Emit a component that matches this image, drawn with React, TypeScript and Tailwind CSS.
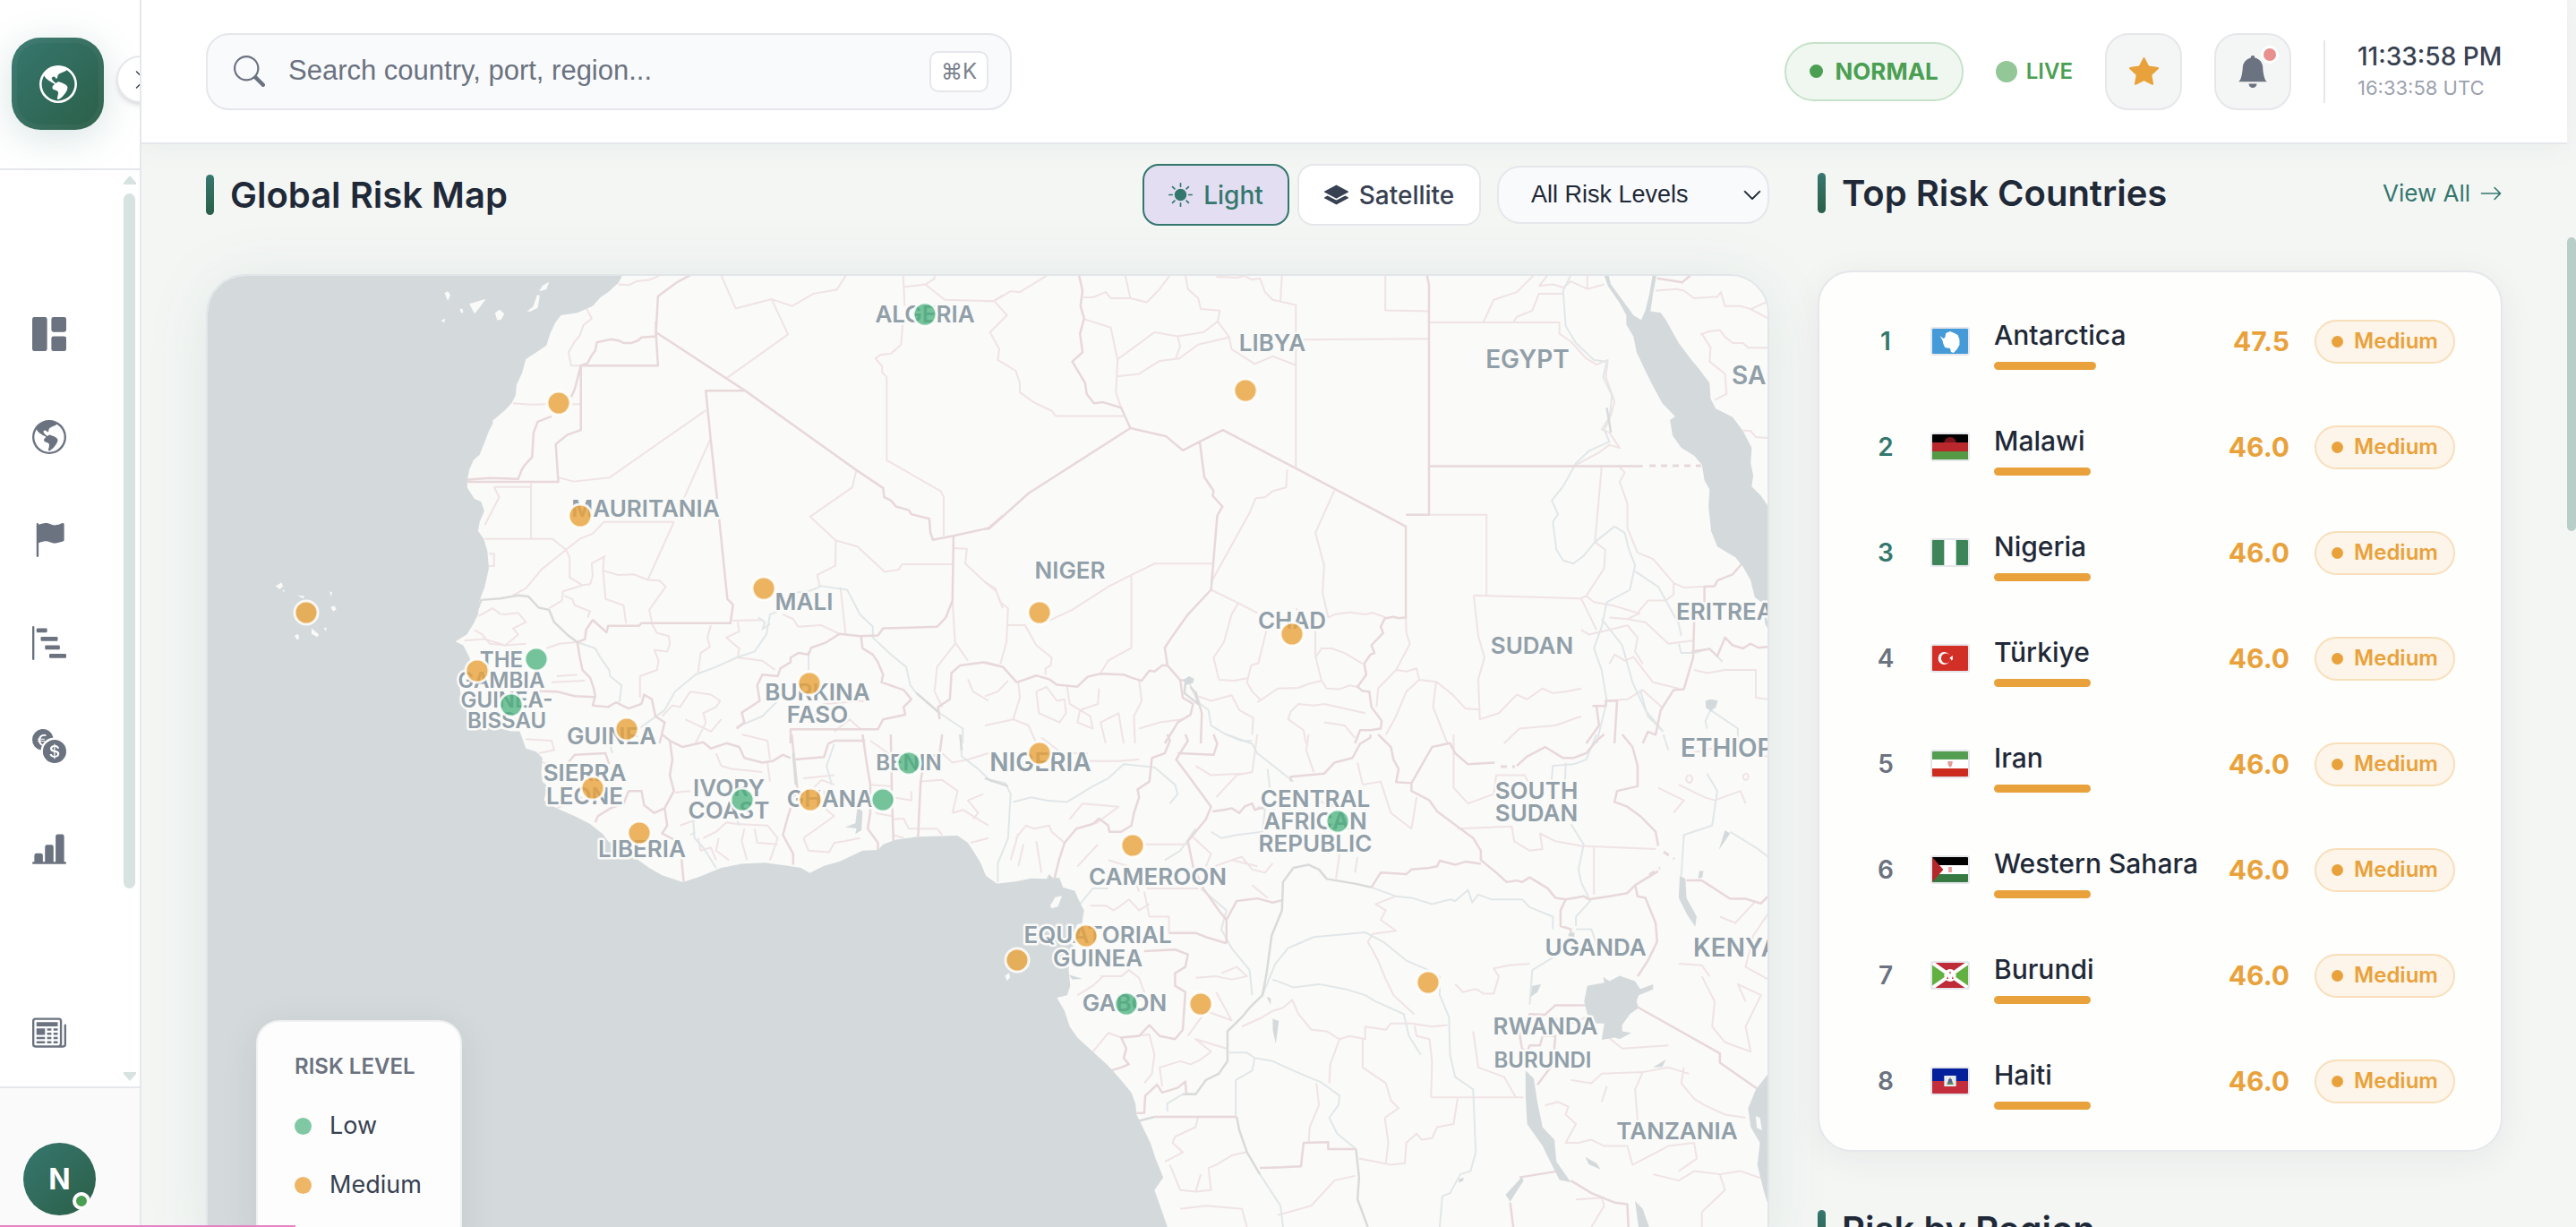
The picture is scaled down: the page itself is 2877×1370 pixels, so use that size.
import React from 'react';
import {
  BsArrowRight,
  BsBarChartLineFill,
  BsBarChartSteps,
  BsBellFill,
  BsChevronDown,
  BsChevronRight,
  BsCurrencyExchange,
  BsFlagFill,
  BsGlobeAmericas,
  BsGrid1X2Fill,
  BsLayersFill,
  BsNewspaper,
  BsSearch,
  BsStarFill,
  BsSunFill,
} from 'react-icons/bs';

const navItems = [
  { label: 'Dashboard', icon: BsGrid1X2Fill },
  { label: 'World', icon: BsGlobeAmericas },
  { label: 'Countries', icon: BsFlagFill },
  { label: 'Timeline', icon: BsBarChartSteps },
  { label: 'Currencies', icon: BsCurrencyExchange },
  { label: 'Analytics', icon: BsBarChartLineFill },
];

const countries = [
  { name: 'Antarctica', code: 'aq', score: 47.5 },
  { name: 'Malawi', code: 'mw', score: 46 },
  { name: 'Nigeria', code: 'ng', score: 46 },
  { name: 'Türkiye', code: 'tr', score: 46 },
  { name: 'Iran', code: 'ir', score: 46 },
  { name: 'Western Sahara', code: 'eh', score: 46 },
  { name: 'Burundi', code: 'bi', score: 46 },
  { name: 'Haiti', code: 'ht', score: 46 },
];

const flags: Record<string, React.ReactNode> = {
  aq: (
    <>
      <rect width="42" height="28" fill="#459bd8" />
      <path d="M9 8l4 3 2-1 1-5 5-2 5 2 4 2 2 5v6l-3 5-4 4-3-1-1-4-6-1-2-4-1-4z" fill="#fff" />
    </>
  ),
  mw: (
    <>
      <rect width="42" height="28" fill="#000" />
      <rect y="9" width="42" height="10" fill="#b9282c" />
      <rect y="19" width="42" height="9" fill="#549a45" />
      <path d="M14 9a7 6 0 0 1 14 0z" fill="#7a1519" />
    </>
  ),
  ng: (
    <>
      <rect width="42" height="28" fill="#3d8558" />
      <rect x="14" width="14" height="28" fill="#fff" />
    </>
  ),
  tr: (
    <>
      <rect width="42" height="28" fill="#d22f27" />
      <circle cx="14" cy="14" r="7" fill="#fff" />
      <circle cx="16" cy="14" r="5.6" fill="#d22f27" />
      <path d="M20 14l4-2v4zM24 11l-1 6-2-4z" fill="#fff" />
    </>
  ),
  ir: (
    <>
      <rect width="42" height="28" fill="#fff" />
      <rect width="42" height="9" fill="#549e52" />
      <rect y="19" width="42" height="9" fill="#cc2b20" />
      <path d="M18 11h6l-1 5-2 2-2-2z" fill="#e79a98" />
    </>
  ),
  eh: (
    <>
      <rect width="42" height="28" fill="#fff" />
      <rect width="42" height="9" fill="#000" />
      <rect y="19" width="42" height="9" fill="#367a42" />
      <path d="M0 0l13 14L0 28z" fill="#b5282a" />
      <rect x="19" y="11" width="4" height="6" fill="#e79a98" />
    </>
  ),
  bi: (
    <>
      <rect width="42" height="28" fill="#bd2c37" />
      <path d="M0 0l21 14L0 28zM42 0L21 14l21 14z" fill="#62b03f" />
      <path d="M0 0l42 28M42 0L0 28" stroke="#fff" strokeWidth="4" />
      <circle cx="21" cy="14" r="7" fill="#fff" />
      <path d="M21 9l1 3h-2zM18 15l1 3h-2zM24 15l1 3h-2z" fill="#bd2c37" />
    </>
  ),
  ht: (
    <>
      <rect width="42" height="14" fill="#04209a" />
      <rect y="14" width="42" height="14" fill="#c42d3c" />
      <rect x="14" y="8" width="14" height="12" fill="#e8ecee" />
      <path d="M17 18h8l-2-5-2-3-2 3z" fill="#5f8e58" />
      <rect x="19" y="12" width="4" height="4" fill="#5b5f9a" />
    </>
  ),
};

// Each tile carries its own grid; sx/sy turn tile units into map units.
const tiles = [
  {
    x: 220,
    y: 290,
    sx: 0.574,
    sy: 0.3444,
    water:
      'M831 40L820 75L800 105L785 122L770 150L740 172L708 180L697 205L687 240L680 278L662 298L640 322L633 365L622 405L620 440L612 465L598 490L575 522L576 530L568 555L560 590L550 632L538 650L530 680L526 715L526 740L540 775L553 785L559 815L550 850L547 880L558 905L565 945L568 1000L560 1060L550 1105L547 1150L538 1180L525 1215L503 1238L518 1250L528 1282L535 1310L520 1340L510 1375L515 1430L530 1480L560 1510L605 1525L625 1545L632 1600L-10 1600L-10 40Z',
    islands:
      'M482 108l6-6 5 12-5 20zM530 143l32-16-13 30-9 18zM580 172l9-10 9 14-6 18-8 2zM511 160l6-1 1 12-4 2zM475 196l8-5-2 14zM642 168l12-16 8-38 5 2-4 40-14 12zM666 102l6-18 13-12-5 24zM153 1058l12-12 2 14-6 8zM166 1070l5 2-2 6zM195 1088l14 2-2 8zM258 1075l5 4-2 14zM260 1126l8-4 3 12-6 6zM247 1194l5-2-1 14zM223 1195l14 20-3 8-11-10zM190 1218l7-4 2 14-5 4z',
    lakes: '',
    nation:
      'M960 50L935 72L897 118L893 240L897 343L747 343L747 552L720 568L698 598L703 720L526 720M893 200V248L865 252L858 262L845 270L830 270L820 262L805 258L778 268L775 295L768 310L760 335L747 343L735 420L728 445M690 508L663 525L655 560L652 640L638 665L632 680L625 711L570 708L526 713M893 235L1067 425L1283 682L1335 740L1337 770L1350 780L1360 800L1385 812L1390 825L1425 840L1427 885L1432 908L1472 895L1540 870L1568 830M1067 425L990 425L1000 590L1012 775M1016 840L1032 1100L1043 1118L1038 1178H865L860 1187L800 1187L797 1208L770 1168L757 1200L755 1230L740 1240M1472 895L1470 1105L1457 1160L1440 1190L1335 1195L1325 1218L1290 1220L1250 1213L1225 1240L1195 1258L1190 1280L1170 1275L1155 1290L1155 1305L1135 1325L1130 1350L1100 1345L1090 1380L1095 1430L1060 1468L1065 1500L1050 1520M1292 1220L1295 1260L1315 1280L1325 1305L1335 1345L1332 1370L1375 1395L1390 1425L1375 1450L1378 1475L1335 1490L1325 1522H1155V1568M740 1240L745 1290L750 1330L765 1355L772 1390L775 1415L770 1445L800 1450L815 1435L840 1455L865 1440L870 1410L885 1425L892 1480L910 1500L900 1568M660 1398L700 1400L735 1415L773 1418M1445 1490L1442 1450L1465 1425L1468 1340L1485 1315L1530 1305L1568 1320',
    region:
      'M820 80L840 82L855 70L880 65L900 52M758 158L768 190L752 212L745 245L735 265L723 300L728 343H747M1020 50L1048 158L1118 128L1158 150L1200 110L1245 97L1263 50M1118 128L1150 242L1032 382M1374 50L1377 150M1373 210L1370 275L1350 305L1330 308L1320 320L1333 345L1333 365L1342 380V650L1447 750L1453 770V895M1377 88L1417 80L1455 130L1550 134L1568 115M1435 50V62L1417 80M990 488L803 706L733 719L703 706M998 585L947 775M928 850L877 1038L850 1020L820 1022L790 1008M578 737H650V905M578 737L588 770L560 860M650 725V737M560 905H692L718 940L670 1005L640 1065L615 1088M928 850H792L770 888L745 905L718 940L725 965V1030L750 1055L732 1065L712 1075L710 1105L685 1130M795 960L768 985L770 1025L765 1052L750 1055M792 960L790 1008L795 1100L830 1120L835 1180M877 1038L900 1040L912 1060L880 1135L885 1175M615 465L650 470L680 468M730 468H747M1283 682L1275 738L1193 833L1243 910L1285 930L1338 1012L1365 1005L1372 987H1470M1243 910L1242 992L1207 1022L1212 1062M1252 1062L1262 1213M1472 935L1498 937L1495 985L1530 1040L1555 1075L1568 1130M568 953H578V993H568M548 1155L575 1130L590 1148L600 1150L625 1145L640 1175L615 1195L625 1215L600 1250L570 1245L555 1215L540 1200M885 1180L895 1210L918 1220L920 1245L915 1270L890 1265L898 1300L895 1330L862 1350V1420M1000 1185L993 1225L998 1255L980 1275L975 1340M1052 1175L1055 1205L1030 1225L1055 1260L1052 1290L1100 1300L1125 1330M760 1160L765 1140L735 1120L730 1100L715 1090M905 1480L925 1445L940 1450L960 1400L1000 1410L1018 1430L1010 1450L985 1470L990 1500L970 1568M1470 1105L1475 1240L1500 1300M1475 1245L1440 1320L1435 1400L1450 1450M1140 1150L1160 1165L1170 1190L1215 1185L1250 1213M1042 1170L1100 1168M680 1260L705 1245L740 1240M520 1235L560 1230L600 1250L640 1245M1240 1530L1270 1490L1290 1520M700 1350L740 1345M690 1370L755 1365M950 1490L1000 1530L1020 1490M1500 1360L1510 1400L1540 1430M1190 1500L1220 1440L1300 1430',
    river:
      'M740 1240L775 1260L785 1290L802 1330L804 1350L826 1380L822 1435M1160 1080L1190 1075L1215 1058L1265 1070L1290 1150L1315 1190V1225L1350 1280L1380 1320L1388 1380L1400 1405L1445 1470L1490 1520V1568M1130 1140L1115 1150L1108 1215L1085 1270L1050 1290L1010 1320L970 1345L930 1400L910 1460L860 1520M1190 1270V1330M1130 1430L1100 1480L1050 1515M1092 1160L1105 1175L1100 1198L1115 1180',
    trunk: 'M547 1130L553 1103L590 1098L625 1088L645 1092L665 1128L685 1135L695 1175L720 1215L740 1240M1400 1405L1445 1470',
  },
  {
    x: 1100,
    y: 290,
    sx: 0.574,
    sy: 0.3444,
    water:
      'M1203 40L1212 85L1235 140L1248 180L1248 210L1262 250L1268 300L1285 360L1300 410L1318 465L1343 508L1333 520L1338 570L1355 610L1380 635L1395 665L1400 715L1410 745L1408 800L1413 880L1425 930L1460 965L1475 995L1490 1040L1498 1095L1515 1115L1518 1180L1540 1250L1540 820L1524 800L1510 765L1492 735L1495 700L1490 660L1492 610L1475 555L1455 510L1422 483L1412 450L1410 400L1390 355L1375 325L1350 270L1325 195L1315 172L1295 167L1300 110L1308 40L1300 40L1293 110L1285 165L1277 195L1262 180L1240 130L1218 80L1212 40Z',
    islands: '',
    lakes:
      'M387 1362l10-12 10 8-2 14-16 8zM1402 1430l10-5 14 4-4 22-10 12-9-10z',
    nation:
      'M183 50L190 100L186 150L193 190L185 240L190 300L170 330L195 400L198 435L212 465L230 462L265 480L283 546L353 573L385 618L418 590L463 552L600 672L819 865V1160L805 1162L795 1158L778 1163L770 1190L775 1210L752 1250L758 1275L750 1280L738 1310L742 1345L725 1385L735 1398L748 1400L752 1450L772 1495L770 1520L750 1525L730 1525L720 1568M283 546L85 757L8 872L0 873M418 590L427 705L445 750L443 765L462 800L452 830L440 1070L395 1150L365 1220L350 1258L355 1315L380 1363H400M860 50L864 80V827H819M864 669H1280M355 1315L345 1315L330 1335L320 1332L305 1365L285 1355L270 1345L225 1342L200 1352L180 1384L140 1378L125 1360L100 1348L62 1370L35 1320L0 1305M380 1363L385 1420L405 1440L400 1475L375 1500L370 1515L350 1568M410 1400L422 1470L420 1568M1473 985L1455 1020L1425 1040L1420 1058L1400 1060V1130L1380 1170L1378 1290L1360 1392L1340 1395L1315 1460L1305 1540L1290 1530L1280 1568M1375 1270L1410 1262L1425 1285L1440 1225L1455 1250L1475 1260L1490 1245L1505 1258L1524 1255M1308 60L1357 73L1373 50M1182 1447H1208V1430H1230L1225 1568M1190 1447L1195 1510L1170 1568',
    region:
      'M0 134H18L50 102L68 105L120 52M18 134L43 180L10 235L28 290L25 325L60 360L68 400L68 430L95 462L130 490L138 507H270M273 50L283 125M192 122L210 122L235 105L245 125L283 125L315 138L340 95L360 50M192 192L245 220L258 325L255 430L265 480M258 323L330 235L375 248L425 235L453 200L457 165L420 160L415 125L395 95L390 50M453 200L475 250L480 290L525 338L560 313L605 342M475 252L415 275L378 320L340 328L300 370L258 378M375 248L380 280L372 318M450 55L490 58L505 52L520 65L535 60L545 105L560 130L605 147V675M578 50L575 135M605 259L864 256M779 50V164L864 167M864 203H1118V240L1140 265L1170 320L1190 340L1212 325L1208 380L1225 460L1218 505L1200 550L1215 560L1235 610L1215 600L1195 625L1150 665M970 203L990 130L1035 105L1068 50M1028 203L1035 185L1065 165L1078 110H1125M1078 85L1095 50M1078 85L1105 80L1125 90L1140 70L1172 95L1205 80M1172 50V95M588 680L586 738L560 750L545 770L527 773L515 820L442 1040M680 748L643 885L660 990L657 1080L668 1160M864 827H976V1088M951 1088L1160 1098L1190 1200M951 1088L960 1220L972 1290L960 1360L963 1490L1000 1470L1020 1435L1035 1410L1055 1425L1085 1390L1105 1405L1130 1400L1160 1390M1200 672L1187 915L1207 940L1205 1000L1170 1090L1160 1098M1235 672L1245 690L1235 720L1250 790V870L1270 950L1300 970L1340 1048L1360 1063L1420 1058M1170 1090L1185 1110L1220 1120L1270 1145L1290 1105H1325L1340 1085V1050M440 1070L493 1113L530 1145M493 1113L480 1150L465 1240L445 1290L455 1360M548 1200L532 1308L518 1315L510 1370L520 1400L535 1425M643 1200V1285L655 1365M643 1290L655 1260L675 1260L700 1275L735 1310M605 1130L615 1150L640 1190M668 1160L680 1150L710 1143L740 1150L755 1145L780 1160M442 985H330L285 1022L240 1060L170 1135L125 1170M285 1022V1258L250 1290L240 1300L225 1340M0 1045L20 1065L30 1110L45 1130L42 1240L30 1310M45 1185H78L100 1250L130 1290L128 1315L118 1325V1345M819 1160L820 1210L827 1245L800 1330L765 1390L762 1450M800 1330L820 1335L840 1325L845 1362L878 1368L895 1390L910 1410L935 1455L963 1458M845 1362L820 1400L800 1480L780 1540M878 1368L872 1450L900 1568M455 1362L485 1365L510 1357M655 1365L630 1375L610 1388L570 1390L530 1435M655 1365L665 1390L690 1392L710 1380L725 1385M625 1568L620 1525L590 1490L595 1465L610 1440L640 1445L660 1440L740 1470M1305 100L1345 95L1360 100L1380 125L1425 120L1432 105L1440 150L1470 150L1490 160L1524 190M1490 160L1524 135M1392 242L1410 232L1430 228L1440 250L1455 270L1475 270L1485 285L1524 285M1395 240L1412 285L1410 330L1440 370L1443 435L1420 455M1475 553L1490 555L1500 575L1524 578M1160 1200L1175 1215L1215 1200L1250 1185L1270 1225L1265 1270L1280 1310M1250 1165L1285 1175L1330 1245L1378 1235M1275 1145L1250 1165L1215 1160M1215 1310L1225 1280L1245 1300L1262 1288L1300 1370L1350 1390M1210 1430L1250 1425L1280 1395L1320 1455M1380 1330L1405 1340L1440 1330L1500 1330V1420L1524 1425M65 1370L68 1420L55 1490M0 1415L25 1400L45 1365M160 1384L165 1440L205 1480L210 1520L180 1500L185 1460L220 1440L222 1390M300 1365L305 1430L290 1480L292 1568M235 1568L225 1500L260 1470L270 1568M100 1400L120 1385L140 1430L155 1425L158 1470L145 1500L105 1470L100 1400M0 1510L55 1490L85 1510L100 1568M415 1415L440 1430L480 1412L495 1460L522 1485L520 1540M300 1520L340 1500L385 1490M660 1500L700 1510L720 1550M1010 1568L1040 1520L1110 1510L1160 1480',
    river:
      'M1140 50L1125 100L1130 215L1150 270L1185 325L1210 330L1203 380L1220 440L1215 520L1205 550L1215 590L1175 620L1150 660L1125 735L1103 780L1115 825L1105 850L1112 940L1125 975L1145 985L1165 960L1187 915L1225 865L1245 885L1253 940L1265 990L1255 1070L1210 1110L1200 1190L1185 1260L1200 1330L1210 1430L1190 1568M1265 1010L1310 1060L1350 1180L1355 1220M1200 1165L1240 1250L1260 1370L1285 1460L1320 1530M1350 1245L1355 1275L1380 1275L1410 1260L1435 1303M397 1370L415 1435L435 1460L440 1510L470 1540L500 1560L520 1560M1412 1460L1402 1495L1405 1520M1412 1460L1465 1520V1568M1275 1395L1290 1480L1320 1530',
    trunk: 'M390 1375L388 1405L415 1440L410 1405L400 1385M1210 480L1218 560',
  },
  {
    x: 220,
    y: 820,
    sx: 0.574,
    sy: 0.3508,
    water:
      'M628 -10L640 45L660 55L672 75L670 120L672 150L682 165L675 210L700 235L735 260L765 285L790 318L800 340L850 390L880 425L905 448L945 470L975 455L1020 425L1060 412L1105 408L1150 418L1175 425L1192 441L1220 418L1250 405L1295 370L1325 368L1335 350L1360 335L1400 326L1480 322L1500 345L1512 375L1525 410L1535 450L1558 477L1558 1700L-10 1700L-10 -10Z',
    islands: '',
    lakes: 'M1285 230l10 15-2 60-12 12 2-18-22-4 20-12z',
    nation:
      'M722 90L735 65L795 60L802 95M775 280L780 260L805 235L830 220L840 180L865 180L870 225L890 250L910 235L915 290L905 315L940 345L947 470M905 0L920 20L945 40L985 25L1000 45L1030 28L1055 40L1065 75L1100 90L1120 85L1140 65L1155 75M920 20L925 80L920 130L928 180L910 235M1157 0L1163 90L1168 170L1150 260L1140 320L1160 380V415M1163 80L1220 72L1228 30L1240 20L1300 20M1295 0L1302 80L1310 160V250L1305 300L1325 345V368M1350 0L1352 180L1355 340M1450 0L1445 60L1415 80L1408 150L1403 325',
    region:
      'M640 15L690 20L695 50L665 60M645 70L690 100M700 235L750 200M985 330L1010 310L1030 280L1050 285L1110 290L1130 330L1115 400M1015 330L1010 370L1035 400M1065 300L1060 340L1070 400M1085 300L1090 345L1130 350M975 330L980 370L1000 360L1010 400M1180 330L1190 370L1230 375L1240 345L1260 340L1290 330M1220 180L1225 240L1240 260L1180 330M1355 200L1390 210V180M1355 270L1375 268L1385 300L1440 300L1450 320M1450 60L1470 90L1500 80L1540 60M1470 250L1490 240L1510 260L1540 290M1010 60L1020 100L1040 110L1100 120M990 260L940 290M1110 90L1115 150M1505 345L1540 330M1408 150L1450 145L1480 180L1470 250M1355 320L1375 330M1310 160L1352 165M1320 250L1352 260M1060 0L1110 20L1115 80M1180 140L1240 130M960 180L930 185M1200 170L1215 145L1240 160M1310 20L1345 60L1352 120M1530 190L1500 210L1520 250L1510 270',
    river:
      'M800 0L808 60M1240 30L1225 100L1235 160M1485 0L1488 70L1520 110L1545 150L1568 155M965 260L968 330L985 360L1010 425M868 0L885 -20M1050 270L1055 290M960 320L970 310',
    trunk: 'M1160 60L1165 160M1485 0L1488 50',
  },
  {
    x: 1100,
    y: 820,
    sx: 0.574,
    sy: 0.3508,
    water:
      'M-10 450L22 475L60 468L90 458L120 460L125 445L132 457L145 457L152 487L175 498L182 525L193 560L190 590L186 640L165 690L163 750L166 800L160 830L140 838L155 880L165 930L180 965L210 1010L240 1055L265 1100L285 1140L293 1175L295 1210L310 1260L322 1300L332 1350L347 1410L330 1450L345 1520L362 1600L-10 1700ZM1540 1050L1524 1080L1500 1130L1485 1190L1490 1250L1508 1300L1503 1370L1515 1450L1530 1530L1550 1530V1050Z',
    islands: 'M127 545l10-27 13-4-8 34-12 6zM39 768l8-8 2 14-6 10zM1500 1215l8 5 4 40-10-8z',
    lakes:
      'M1172 800L1205 790L1203 772L1215 785L1235 768L1265 785L1275 810L1300 795L1300 812L1272 830L1268 850L1272 870L1255 890L1240 925L1240 945L1258 950L1235 970L1225 965L1200 972L1205 920L1190 920L1172 890L1166 850ZM1052 1070L1068 1095L1075 1170L1085 1250L1108 1290L1112 1360L1140 1425L1118 1418L1100 1360L1085 1310L1055 1240L1052 1150ZM1265 1485L1280 1510L1293 1570L1272 1570ZM1352 450L1363 460L1365 520L1385 580L1382 612L1365 570L1350 520ZM1065 800L1082 795L1075 820L1062 835ZM1168 1345L1190 1365L1198 1385L1175 1368ZM1045 1408L1048 1420L1022 1487L1013 1465ZM163 765L190 778L170 780ZM1440 305L1450 315L1428 368ZM560 905L572 912L566 985L560 940ZM1300 1060L1325 1035L1318 1058ZM922 1415l10-5-2 12-8 5zM548 835l8 5 0 20zM1390 435l8 0-2 20-8 5zM1135 635l12-5 0 15-10 5z',
    nation:
      'M355 0L360 20L350 60L325 75L320 150L297 175L300 200L290 250L285 290L265 310L242 310L240 290L222 268L210 285L178 300L155 345L145 395L135 460M390 0L395 20L372 80L395 130L440 230L430 270L395 340L405 420L425 490L455 560L470 590V665M375 60L445 65L452 30L445 0M443 245L465 240L480 235L495 250L505 230L520 220L525 240L550 228M595 150L595 135L660 125L680 90L715 75L730 30L750 10V0M765 0L790 40L795 80L805 110L800 152L830 155L870 40L905 28L915 60L940 95L992 90M830 155V180L865 210L880 245L925 300L950 330L965 370V400L995 440L1015 470L1035 465L1045 470L1060 455L1095 490L1110 520L1130 525L1120 560V610L1140 620V640M965 412L935 405L915 415L885 402L880 420L865 425L830 430L820 445L770 440L752 487M1035 100L1055 70L1090 40L1125 75L1145 75L1170 60L1190 20L1205 0M1240 0L1260 40L1270 100V165L1230 180L1225 215L1250 230L1275 260L1305 310L1310 355M1130 525L1165 515L1175 525L1215 515L1250 505L1265 480L1310 435M1265 480L1270 515L1285 520L1305 600L1308 660L1290 720L1270 770M1365 465H1395L1450 523L1480 523L1510 538L1524 515M1270 868L1430 1015V1045L1505 1130M1168 862H1110L1090 892L1060 890L1040 950L1045 1000L1055 1010L1060 990L1080 990L1085 960L1110 960L1105 1050L1075 1115M1115 1390L1040 1410M1140 1420L1180 1460L1225 1490L1250 1495L1252 1568M1022 1490L1028 1568M358 632L410 632L430 645L470 665M470 590L490 530L530 522L560 535L578 528M310 690L370 685L395 700L390 740L370 760V800L390 820L385 940L370 970L340 960L320 925L300 960L265 965L275 1000L270 1030L280 1050L265 1060L245 1070M295 1205L310 1205L312 1150L335 1115L345 1140L375 1125L390 1105L392 1145L405 1145M330 1217H490M535 1380L570 1378L615 1375L620 1300L668 1298V1320H722',
    region:
      'M300 350H395M920 300L1025 293L1030 340L1060 370L1085 365L1080 315L1110 340L1160 355L1305 365M1185 360V510M912 0V170L940 220L990 190M868 1155H1048M868 1155L870 1040L865 970L840 960L835 920M920 1155L912 1240L880 1250L870 1285L850 1290L840 1270L820 1300L817 1365L790 1370L760 1360L728 1350M780 1365L785 1300L778 1220M500 930L540 900L560 880L580 870L598 845L610 890L635 940L665 945L690 970L710 960L740 970V930L780 940L790 920L830 920L870 930L900 925M690 970L672 1050L670 1110M735 970L735 1060L780 1110L790 1165L805 1190L778 1220M800 515L760 540L780 560L770 590L800 625L755 635L745 660L765 720L780 780L795 830L835 890M915 795L930 820L955 810L970 825L990 825L1000 770L990 745L1020 735L1060 730M950 945L960 1060L1010 1090L1033 1155M645 1110L650 1180L632 1250L630 1300M310 500L320 580L358 580V632M205 545L235 545L250 560L260 550L280 525L300 560L320 540M415 490H315M225 770H265L280 750L300 775L310 820L280 890M180 830L210 800L230 770M265 965L320 955L330 1020L325 1080L310 1110M345 1120L340 1060L380 1040L400 1050L420 1035L440 1010L410 970L440 985L470 1000M415 1217L410 1250L370 1280L365 1300L385 1330L350 1360M508 1330L480 1340L450 1370L435 1380L440 1450L410 1455L380 1450L360 1370M380 1510L430 1500L500 1510L510 1568M720 1405L680 1420L635 1500L570 1530M1090 1180L1115 1170L1135 1185L1130 1210L1150 1240L1130 1300L1155 1300L1180 1290L1205 1310L1250 1310L1260 1370L1330 1310L1380 1300L1385 1350L1350 1390M1140 1100L1180 1110L1200 1080L1280 1075L1265 1130L1270 1230M1280 1075L1330 1060L1370 1080M1360 1060L1355 1110L1380 1160L1400 1180L1440 1210L1480 1220M1300 1400L1350 1420L1380 1390L1430 1400L1470 1390L1524 1420M1150 1480L1200 1475L1205 1500L1180 1568M1395 1568V1520L1440 1450L1430 1400M1395 770L1420 850L1415 930L1440 980L1490 1010L1480 930L1510 830L1465 795L1480 850M1350 730L1395 735L1410 770M1524 570L1495 640L1480 740L1524 780M410 775L450 770L480 780L510 770L490 740L460 760M480 400L500 390L520 430L545 440L560 410M735 160L770 150L790 250L830 300M630 0L625 50L640 120M735 160L725 90M720 440L725 390M690 380L683 460M1350 160L1400 200L1420 210L1470 180L1480 220M60 330L80 290L95 300L125 290L130 310L155 345M55 90L120 110L200 85L260 85L300 80M110 10L150 60L200 60M215 285L260 230L190 220L165 270M520 480L550 520M430 430L480 400L530 420M75 350L65 420M100 340L110 440M65 315L50 400M400 320L440 380L430 420M450 200L490 130L520 120L530 0M410 100L440 130L500 125M1310 170L1360 210L1340 250M1360 30L1370 60L1430 40L1524 70M1370 130a6 12 0 1 0 1 0M1480 125a5 10 0 1 0 1 0M990 190L995 130L1050 130L1060 160M210 1010L240 950L265 965M1200 1170L1210 1120M1210 960L1240 1000L1330 990M1100 900L1140 920L1170 900M830 300L840 200M1430 580L1460 600L1500 530M240 400L280 420L300 500M220 350L180 420M640 205L680 230M410 1455L420 1400M395 960L430 880L480 910L450 820',
    river:
      'M752 487L800 515L830 520L870 540L905 525L915 530L940 495L948 535L960 510L985 525L1045 525L1060 550L1105 580V620M540 830L565 730L590 680L640 645L740 630L775 660L820 720L860 748L885 770V830L903 900L905 1020L915 1090L950 1130L955 1330L945 1390L925 1400L905 1460L890 1470L885 1568M560 780L600 805L650 795L700 810L740 830L760 850L815 890L825 960L848 1020M475 1013H510L525 1030L560 1040L600 1070L655 1108L690 1150L688 1180L670 1220L685 1270L722 1320M525 1030L520 1070L488 1100V1217M1190 0L1170 80L1145 95L1105 100L1100 200M1130 90L1128 180M1140 285L1165 350L1155 430L1160 470L1178 530L1150 580V610M55 215L90 200L120 210L160 215L210 165L240 140L270 95L330 105L370 160L375 190L360 220M0 140L40 155L50 190L45 330L25 410V470M470 0L520 30L530 60L600 150M440 310L460 330L490 320L540 310L545 240L530 230M1405 125L1425 180L1415 290L1360 320L1355 450M420 490L470 560L460 620L480 680L515 750L520 830M535 1400L555 1450L575 1500L580 1568M1060 860L1065 750L1115 700M1195 690L1180 620L1150 620M1450 310L1500 360L1524 390M350 400L380 370L410 300M180 550L210 490L240 490M355 1200V1175L385 1145M1320 0L1330 50M550 110L555 180',
    trunk:
      'M752 487L720 475L665 460L650 430L630 415L600 425L580 470L578 560L558 640L548 760L540 830L515 870L500 900L472 945V1040L455 1080L430 1100L410 1145L385 1145M330 1217L300 1230M490 1217L495 1260L510 1330L535 1400M722 1320L728 1410L725 1480L745 1568M0 140L45 165',
  },
];

const labels: [string, number, number, number?, ('start' | 'middle')?][] = [
  ['ALGERIA', 1033, 360],
  ['MAURITANIA', 721, 577],
  ['MALI', 898, 681],
  ['THE', 560, 745, 24],
  ['GAMBIA', 560, 768, 24],
  ['GUINEA-', 566, 790, 24],
  ['BISSAU', 566, 813, 24],
  ['BURKINA', 913, 782],
  ['FASO', 913, 807],
  ['GUINEA', 683, 831],
  ['SIERRA', 653, 872],
  ['LEONE', 653, 898],
  ['IVORY', 814, 889],
  ['COAST', 814, 914],
  ['GHANA', 927, 901],
  ['BENIN', 1015, 860, 24],
  ['NIGERIA', 1162, 861, 28],
  ['LIBERIA', 717, 957],
  ['LIBYA', 1421, 392],
  ['EGYPT', 1706, 411, 28],
  ['SA', 1934, 429, 28, 'start'],
  ['NIGER', 1195, 646],
  ['CHAD', 1443, 702],
  ['SUDAN', 1711, 730],
  ['ERITREA', 1872, 692, 26, 'start'],
  ['ETHIOP', 1877, 845, 28, 'start'],
  ['SOUTH', 1716, 892],
  ['SUDAN', 1716, 917],
  ['CENTRAL', 1469, 901],
  ['AFRICAN', 1469, 926],
  ['REPUBLIC', 1469, 951],
  ['CAMEROON', 1293, 988],
  ['EQUATORIAL', 1226, 1053],
  ['GUINEA', 1226, 1079],
  ['GABON', 1256, 1129],
  ['UGANDA', 1782, 1067],
  ['KENYA', 1891, 1068, 28, 'start'],
  ['RWANDA', 1726, 1155],
  ['BURUNDI', 1723, 1192, 24],
  ['TANZANIA', 1873, 1272],
];

const lowMarkers = [
  [1033, 351],
  [599, 736],
  [571, 787],
  [1015, 852],
  [829, 893],
  [986, 893],
  [1494, 917],
  [1258, 1121],
];

const mediumMarkers = [
  [624, 450],
  [648, 576],
  [853, 657],
  [342, 684],
  [533, 749],
  [904, 763],
  [700, 814],
  [662, 880],
  [905, 893],
  [714, 930],
  [1391, 436],
  [1161, 684],
  [1443, 708],
  [1161, 841],
  [1265, 944],
  [1213, 1045],
  [1136, 1072],
  [1595, 1097],
  [1341, 1121],
];

function RiskMap() {
  return (
    <svg
      viewBox="232 308 1742 1099"
      preserveAspectRatio="xMinYMin slice"
      className="block h-full w-full"
      role="img"
      aria-label="Risk map of Africa"
    >
      <rect x="232" y="308" width="1742" height="1099" fill="#fafaf8" />
      {tiles.map((t) => (
        <g
          key={`${t.x}-${t.y}`}
          transform={`translate(${t.x} ${t.y}) scale(${t.sx} ${t.sy})`}
          fill="none"
          strokeLinejoin="round"
        >
          <path d={t.region} stroke="#f0e3e4" strokeWidth="2" vectorEffect="non-scaling-stroke" />
          <path d={t.river} stroke="#e1e7e9" strokeWidth="2" vectorEffect="non-scaling-stroke" />
          <path d={t.nation} stroke="#e8d8da" strokeWidth="2.5" vectorEffect="non-scaling-stroke" />
          <path d={t.trunk} stroke="#d9dbdb" strokeWidth="2.5" vectorEffect="non-scaling-stroke" />
          <path d={t.water} fill="#d4dadc" />
          <path d={t.lakes} fill="#d4dadc" />
          <path d={t.islands} fill="#fafaf8" />
        </g>
      ))}
      <path d="M1842 520h58M1676 856h16M1858 951l12 8M1842 977l12-8" stroke="#e8d8da" strokeWidth="3" strokeDasharray="7 6" />
      {labels.map(([text, x, y, size = 26, anchor = 'middle']) => (
        <text
          key={`${text}-${y}`}
          x={x}
          y={y}
          fontSize={size}
          textAnchor={anchor}
          className="font-['Inter',sans-serif] font-semibold"
          fill="#919fa9"
          stroke="#fafaf8"
          strokeWidth="5"
          strokeLinejoin="round"
          paintOrder="stroke"
        >
          {text}
        </text>
      ))}
      {lowMarkers.map(([x, y]) => (
        <circle key={`${x}-${y}`} cx={x} cy={y} r="13" fill="#48b07c" fillOpacity="0.75" stroke="#fff" strokeOpacity="0.85" strokeWidth="3" />
      ))}
      {mediumMarkers.map(([x, y]) => (
        <circle key={`${x}-${y}`} cx={x} cy={y} r="13" fill="#e9a23b" fillOpacity="0.8" stroke="#fff" strokeOpacity="0.85" strokeWidth="3" />
      ))}
    </svg>
  );
}

function SectionTitle({ children }: { children: React.ReactNode }) {
  return (
    <h2 className="flex items-center gap-[18px] text-[40px] leading-[64px] font-semibold text-[#1f2937]">
      <span className="h-[45px] w-[9px] rounded-full bg-linear-to-b from-[#37776f] to-[#2b5f48]" />
      {children}
    </h2>
  );
}

function Sidebar() {
  return (
    <aside className="relative z-30 flex w-[158px] shrink-0 flex-col overflow-hidden border-r-2 border-[#e5e7eb] bg-white">
      <div className="relative h-[190px] shrink-0 border-b-2 border-[#e5e7eb] pt-[42px] pl-[13px]">
        <a
          href="#"
          aria-label="Home"
          className="flex size-[103px] items-center justify-center rounded-[32px] bg-linear-to-br from-[#37776f] to-[#2b5f48] shadow-[0_8px_44px_rgba(52,119,109,0.2),inset_0_0_0_6px_rgba(255,255,255,0.04)]"
        >
          <BsGlobeAmericas className="size-[42px] text-white" />
        </a>
        <button
          type="button"
          aria-label="Expand sidebar"
          className="absolute top-[62px] left-[130px] flex size-[53px] items-center justify-center rounded-full border-2 border-[#e5e7eb] bg-white text-[#374151] shadow-md"
        >
          <BsChevronRight className="size-6" />
        </button>
      </div>

      <div className="flex min-h-0 flex-1 justify-between pr-[5px]">
        <nav className="flex flex-col gap-[77px] pt-[164px] pl-9 text-[#6b7280]">
          {navItems.map((item) => (
            <a key={item.label} href="#" aria-label={item.label}>
              <item.icon className="size-[38px]" />
            </a>
          ))}
          <a href="#" aria-label="News" className="mt-[90px]">
            <BsNewspaper className="size-[38px]" />
          </a>
        </nav>
        <div className="flex w-[13px] flex-col items-center justify-between py-[6px]">
          <div className="flex min-h-0 flex-1 flex-col items-center gap-[10px]">
            <svg viewBox="0 0 14 10" className="h-[10px] w-[14px]" fill="#d7e3e1">
              <path d="M7 0l7 8v2H0V8z" />
            </svg>
            <div className="h-[776px] w-[13px] rounded-full bg-[#d7e3e1]" />
          </div>
          <svg viewBox="0 0 14 10" className="h-[10px] w-[14px]" fill="#d7e3e1">
            <path d="M7 10L0 2V0h14v2z" />
          </svg>
        </div>
      </div>

      <div className="h-[157px] shrink-0 border-t-2 border-[#e5e7eb] bg-[#fafafa] pt-[61px] pl-[26px]">
        <button
          type="button"
          className="relative flex size-[81px] items-center justify-center rounded-full bg-linear-to-br from-[#37776f] to-[#2b5f48] text-[32px] font-bold text-white"
        >
          N
          <span className="absolute right-[6px] bottom-[6px] size-5 rounded-full border-4 border-white bg-[#4b9f52]" />
        </button>
      </div>
    </aside>
  );
}

function Header() {
  return (
    <header className="relative z-20 flex h-[161px] shrink-0 items-center justify-between border-b-2 border-[#e5e7eb] bg-white px-[72px] shadow-[0_4px_30px_rgba(52,119,109,0.06)]">
      <label className="flex h-[86px] w-[900px] items-center gap-[26px] rounded-[26px] border-2 border-[#e5e7eb] bg-[#f9fafc] pr-6 pl-[29px]">
        <BsSearch className="size-[35px] shrink-0 text-[#6b7280]" />
        <input
          type="search"
          aria-label="Search"
          placeholder="Search country, port, region..."
          className="min-w-0 flex-1 bg-transparent font-['Liberation_Sans',sans-serif] text-[31px] outline-none placeholder:text-[#6b7280]"
        />
        <kbd className="flex h-[46px] w-[66px] items-center justify-center rounded-[10px] border-2 border-[#e5e7eb] bg-white font-['Inter','DejaVu_Sans',sans-serif] text-[24px] text-[#7b818d]">
          ⌘K
        </kbd>
      </label>

      <div className="flex items-center gap-9">
        <div className="flex h-[66px] items-center gap-[14px] rounded-full border-2 border-[#c5e2c8] bg-[#f0f7f1] px-[26px] text-[26px] font-bold text-[#4b9f52]">
          <span className="size-[15px] rounded-full bg-[#4b9f52]" />
          NORMAL
        </div>
        <div className="flex items-center gap-[10px] text-[24px] font-semibold text-[#4b9f52]">
          <span className="size-6 rounded-full bg-[#93c797]" />
          LIVE
        </div>
        <button
          type="button"
          aria-label="Favourites"
          className="flex size-[86px] items-center justify-center rounded-[26px] border-2 border-[#e5e7eb] bg-[#f4f6f5]"
        >
          <BsStarFill className="size-[33px] text-[#e9a23b]" />
        </button>
        <button
          type="button"
          aria-label="Notifications"
          className="relative flex size-[86px] items-center justify-center rounded-[26px] border-2 border-[#e5e7eb] bg-[#f4f6f5]"
        >
          <BsBellFill className="size-9 text-[#6b7280]" />
          <span className="absolute top-3 right-3 size-5 rounded-full border-3 border-white bg-[#e8908e]" />
        </button>
        <div className="h-[70px] w-[2px] bg-[#e5e7eb]" />
        <div className="w-[162px]">
          <div className="text-[28px] leading-[36px] font-medium whitespace-nowrap text-[#374151]">11:33:58 PM</div>
          <div className="text-[22px] leading-[34px] whitespace-nowrap text-[#9ca3af]">16:33:58 UTC</div>
        </div>
      </div>
    </header>
  );
}

function MapSection() {
  return (
    <section>
      <div className="mb-[54px] flex h-[69px] items-center justify-between">
        <SectionTitle>Global Risk Map</SectionTitle>
        <div className="flex items-center gap-[18px]">
          <div className="flex gap-[9px] text-[28px] font-medium">
            <button
              type="button"
              className="flex h-[69px] w-[164px] items-center justify-center gap-3 rounded-[18px] border-2 border-[#34776d] bg-[#e3def2] text-[#34776d]"
            >
              <BsSunFill className="size-[27px]" />
              Light
            </button>
            <button
              type="button"
              className="flex h-[69px] w-[205px] items-center justify-center gap-3 rounded-[18px] border-2 border-[#e5e7eb] bg-white text-[#374151]"
            >
              <BsLayersFill className="size-[27px]" />
              Satellite
            </button>
          </div>
          <div className="relative">
            <select
              aria-label="Risk level"
              className="h-[65px] w-[304px] appearance-none rounded-[26px] border-2 border-[#e5e7eb] bg-[#f9fafc] pl-9 font-['Liberation_Sans',sans-serif] text-[27px] text-[#1f2937]"
            >
              <option>All Risk Levels</option>
              <option>Low</option>
              <option>Medium</option>
            </select>
            <BsChevronDown className="pointer-events-none absolute top-[22px] right-[8px] size-[22px] stroke-[0.6] text-[#1f2937]" />
          </div>
        </div>
      </div>

      <div className="relative h-[1103px] overflow-hidden rounded-[44px] border-2 border-[#e2e6e9] shadow-[0_8px_70px_rgba(52,119,109,0.1)]">
        <RiskMap />
        <div className="absolute top-[831px] left-[54px] min-h-[260px] w-[230px] rounded-[26px] border-2 border-[#eef0f1] bg-[#fdfdfd] px-[41px] pt-[32px] shadow-[0_8px_44px_rgba(0,0,0,0.08)]">
          <h3 className="text-[24px] leading-[36px] font-semibold whitespace-nowrap text-[#6b7280]">RISK LEVEL</h3>
          <ul className="mt-[15px] text-[27px] leading-[66px] text-[#374151]">
            <li className="flex items-center gap-5">
              <span className="size-[19px] shrink-0 rounded-full bg-[#80c8a3]" />
              Low
            </li>
            <li className="flex items-center gap-5">
              <span className="size-[19px] shrink-0 rounded-full bg-[#eeb768]" />
              Medium
            </li>
          </ul>
        </div>
      </div>
    </section>
  );
}

function CountryRow({ rank, name, code, score }: { rank: number; name: string; code: string; score: number }) {
  return (
    <li className="flex h-[118px] items-center">
      <span className={rank <= 3 ? 'w-8 text-center text-[28px] font-semibold text-[#34776d]' : 'w-8 text-center text-[28px] font-semibold text-[#6b7280]'}>
        {rank}
      </span>
      <svg viewBox="0 0 42 28" preserveAspectRatio="none" className="ml-[34px] h-[32px] w-[44px] shrink-0 rounded-[3px] border-2 border-[#e5e7eb]">
        {flags[code]}
      </svg>
      <div className="ml-[27px] min-w-0 flex-1 pt-1">
        <div className="text-[30px] leading-[42px] font-medium whitespace-nowrap text-[#1f2937]">{name}</div>
        <div className="mt-[9px] h-[9px] rounded-full bg-[#e9a23b]" style={{ width: `${score}%` }} />
      </div>
      <span className="ml-7 text-right text-[30px] font-bold text-[#e9a23b]">{score.toFixed(1)}</span>
      <span className="ml-7 flex h-[49px] w-[157px] items-center justify-center gap-3 rounded-full border-2 border-[#f8dfba] bg-[#fdf5ea] text-[24px] font-semibold text-[#e9a23b]">
        <span className="size-[13px] rounded-full bg-[#e9a23b]" />
        Medium
      </span>
    </li>
  );
}

function TopCountries() {
  return (
    <section>
      <div className="mb-[54px] flex h-[65px] items-center justify-between">
        <SectionTitle>Top Risk Countries</SectionTitle>
        <a href="#" className="flex items-center gap-[10px] text-[26px] text-[#34776d]">
          View All
          <BsArrowRight className="size-[26px]" />
        </a>
      </div>
      <ol className="rounded-[38px] border-2 border-[#e5e7eb] bg-[#fefefd] py-[18px] pr-[51px] pl-[58px] shadow-[0_8px_40px_rgba(31,41,55,0.06)]">
        {countries.map((country, i) => (
          <CountryRow key={country.code} rank={i + 1} {...country} />
        ))}
      </ol>
    </section>
  );
}

export default function App() {
  return (
    <div className="relative flex h-screen overflow-hidden bg-[#f4f6f4] font-['Inter',sans-serif]">
      <Sidebar />
      <div className="flex min-w-0 flex-1 flex-col">
        <Header />
        <main className="grid min-h-0 flex-1 grid-cols-[minmax(0,1fr)_765px] items-start gap-[54px] overflow-hidden px-[72px] pt-[22px]">
          <MapSection />
          <div className="flex flex-col gap-[55px]">
            <TopCountries />
            <SectionTitle>Risk by Region</SectionTitle>
          </div>
        </main>
      </div>
      <div className="w-[10px] shrink-0 pt-[265px]">
        <div className="h-[328px] rounded-full bg-[#b9cec9]" />
      </div>
      <div className="absolute bottom-0 left-0 z-40 h-[2px] w-[330px] bg-[#e583c6]" />
    </div>
  );
}
